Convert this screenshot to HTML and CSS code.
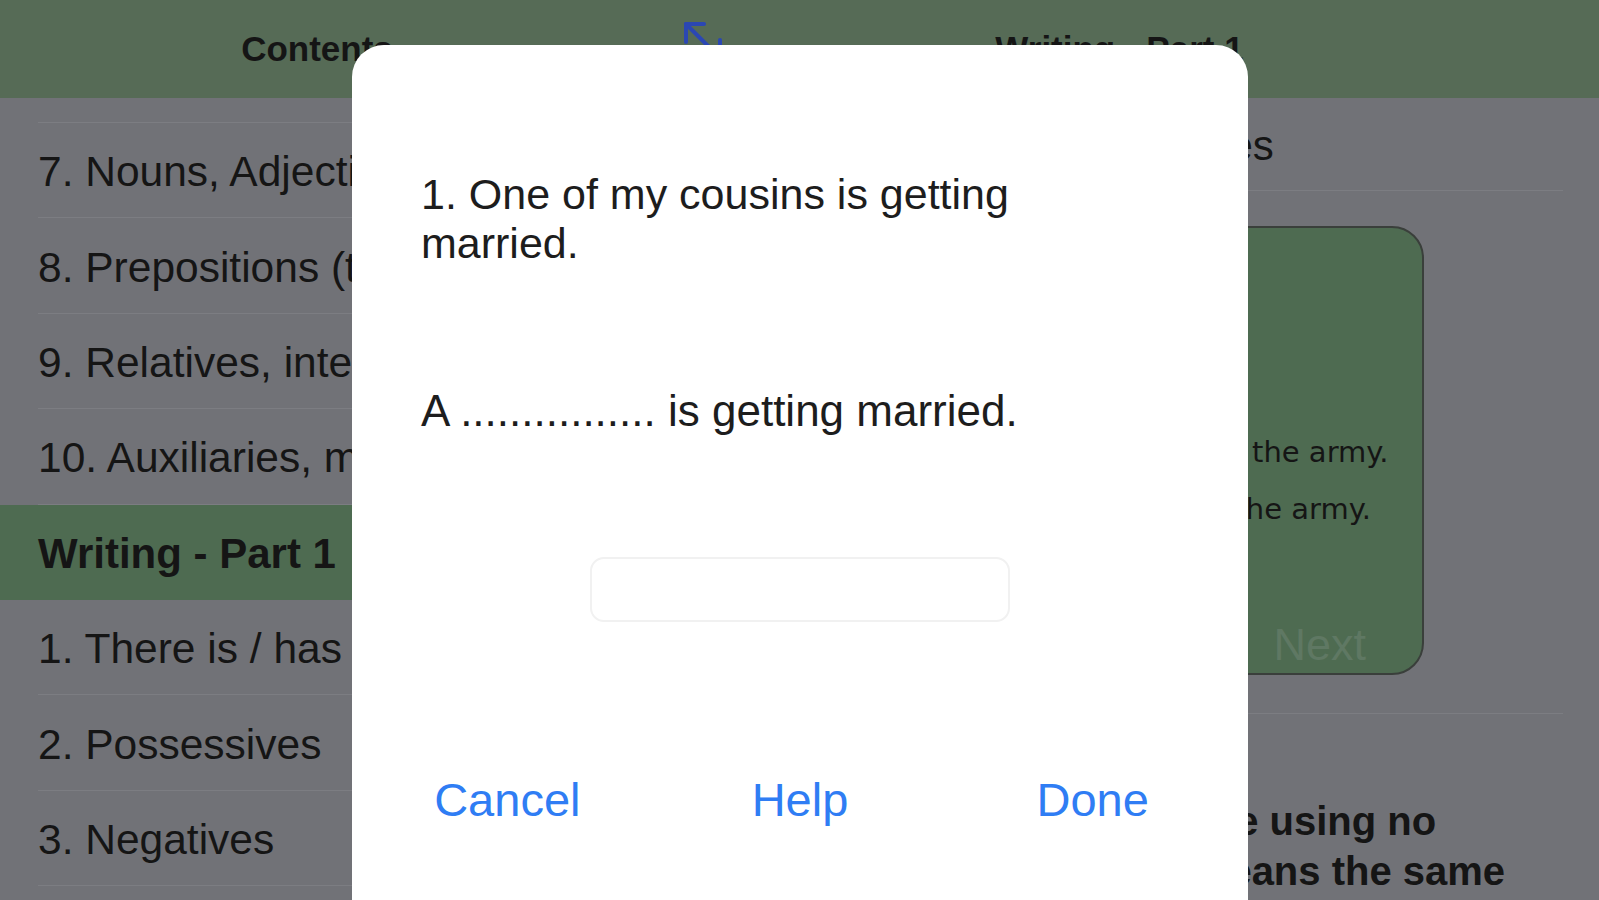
FILE: index.html
```html
<!DOCTYPE html>
<html lang="en">
<head>
    <meta charset="UTF-8">
    <meta name="viewport" content="width=device-width, initial-scale=1.0">
    <title>Writing - Part 1</title>
    <link rel="stylesheet" href="styles.css">
</head>
<body>
    <header class="topbar">
        <div class="topbar-side">Contents</div>
        <div class="topbar-detail">
            <svg class="expand-btn" viewBox="0 0 40 40" fill="none" stroke="#2b47b3" stroke-width="4" stroke-linecap="round" stroke-linejoin="round">
                <path d="M3 3 L37 37"/>
                <path d="M3 21 L3 3 L21 3"/>
                <path d="M19 37 L37 37 L37 19"/>
            </svg>
            <div class="detail-title">Writing - Part 1</div>
            <div></div>
        </div>
    </header>

    <main class="content">
        <nav class="sidebar">
            <div class="list-top"></div>
            <div class="row">7. Nouns, Adjectives and Adverbs</div>
            <div class="row">8. Prepositions (time and place)</div>
            <div class="row">9. Relatives, interrogatives</div>
            <div class="row">10. Auxiliaries, modals</div>
            <div class="row section">Writing - Part 1</div>
            <div class="row">1. There is / has</div>
            <div class="row">2. Possessives</div>
            <div class="row">3. Negatives</div>
        </nav>

        <section class="detail">
            <div class="detail-head">Sentence rewriting: 20 exercises</div>
            <div class="card-cell">
                <div class="card">
                    <div class="card-label">Example:</div>
                    <div class="card-text">
                        Last year my brother joined the army.<br>
                        Now my older brother is in the army.
                    </div>
                    <div class="card-footer">
                        <span>Previous</span>
                        <span>Next</span>
                    </div>
                </div>
            </div>
            <div class="instruction">
                Rewrite each second sentence using no<br>
                more than two words, so it means the same
            </div>
        </section>
    </main>

    <div class="modal">
        <div class="modal-body">
            <p class="question">1. One of my cousins is getting married.</p>
            <p class="sentence">A ................ is getting married.</p>
            <input class="answer" type="text">
        </div>
        <div class="modal-actions">
            <button type="button">Cancel</button>
            <button type="button">Help</button>
            <button type="button">Done</button>
        </div>
    </div>
</body>
</html>
```

FILE: styles.css
```css
body {
    margin: 0;
    width: 1599px;
    height: 900px;
    overflow: hidden;
    position: relative;
    background-color: #717277;
    font-family: "Liberation Sans", Arial, sans-serif;
    color: #151515;
}

/* top navigation bar */
.topbar {
    display: flex;
    height: 98px;
    background-color: #566b56;
}
.topbar-side {
    width: 640px;
    display: flex;
    justify-content: center;
    align-items: center;
    padding-right: 6px;
    box-sizing: border-box;
    font-size: 35px;
    font-weight: bold;
}
.topbar-detail {
    flex: 1;
    display: grid;
    grid-template-columns: 1fr auto 1fr;
    align-items: center;
}
.expand-btn {
    align-self: start;
    width: 40px;
    height: 40px;
    margin: 21px 0 0 43px;
}
.detail-title {
    font-size: 35px;
    font-weight: bold;
}

/* split view */
.content {
    display: flex;
    height: 802px;
}
.sidebar {
    width: 640px;
}
.list-top {
    height: 24px;
    margin-left: 38px;
    border-bottom: 1px solid #7c7d82;
}
.row {
    height: 95.4px;
    margin-left: 38px;
    padding-top: 4px;
    box-sizing: border-box;
    display: flex;
    align-items: center;
    border-bottom: 1px solid #7c7d82;
    font-size: 42.5px;
    white-space: nowrap;
    overflow: hidden;
}
.row.section {
    margin-left: 0;
    padding-left: 38px;
    border-bottom: none;
    background-color: #4e6b51;
    font-weight: bold;
    font-size: 42px;
}

.detail {
    flex: 1;
    padding: 0 36px;
}
.detail-head {
    height: 93px;
    box-sizing: border-box;
    display: flex;
    align-items: flex-end;
    padding-bottom: 20px;
    border-bottom: 1px solid #7c7d82;
    font-size: 42px;
    letter-spacing: -0.3px;
    white-space: nowrap;
}
.card-cell {
    height: 523px;
    box-sizing: border-box;
    padding-top: 35px;
    border-bottom: 1px solid #7c7d82;
}
.card {
    width: 609px;
    height: 449px;
    margin: 0 auto;
    box-sizing: border-box;
    display: flex;
    flex-direction: column;
    padding: 40px 56px 6px 23px;
    background-color: #4e6b51;
    border: 2px solid #3a3f3b;
    border-radius: 32px;
}
.card-label {
    font-family: "DejaVu Sans", sans-serif;
    font-size: 29px;
    line-height: 50px;
}
.card-text {
    margin-top: 106px;
    font-family: "DejaVu Sans", sans-serif;
    font-size: 29px;
    line-height: 57px;
    white-space: nowrap;
}
.card-footer {
    margin-top: auto;
    display: flex;
    justify-content: space-between;
    font-size: 45px;
    line-height: 44px;
    color: #5f7863;
}
.instruction {
    padding-top: 82px;
    font-size: 40px;
    font-weight: bold;
    line-height: 50px;
    white-space: nowrap;
}

/* alert dialog over the page */
.modal {
    position: absolute;
    left: 352px;
    top: 45px;
    width: 896px;
    height: 920px;
    background-color: #fff;
    border-radius: 32px;
    color: #1d1d1d;
}
.modal-body {
    display: flex;
    flex-direction: column;
    padding: 125px 69px 0;
}
.question {
    width: 700px;
    margin: 0;
    font-size: 43px;
    line-height: 49px;
}
.sentence {
    margin: 118px 0 0;
    font-size: 44px;
    line-height: 49px;
}
.answer {
    align-self: center;
    width: 420px;
    height: 65px;
    margin-top: 122px;
    box-sizing: border-box;
    border: 2px solid #f1f1f1;
    border-radius: 14px;
    outline: none;
}
.modal-actions {
    display: grid;
    grid-template-columns: repeat(3, 1fr);
    margin-top: 150px;
    padding: 0 9px;
}
.modal-actions button {
    border: none;
    background: none;
    padding: 0;
    font-family: inherit;
    font-size: 47px;
    line-height: 56px;
    color: #2f7df4;
    cursor: pointer;
}
```
